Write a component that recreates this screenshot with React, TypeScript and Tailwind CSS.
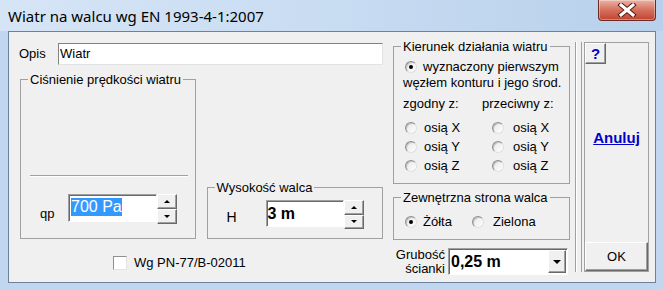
import type { ReactNode } from "react";

const Group = ({ title, className, children }: { title: string; className: string; children?: ReactNode }) => (
  <fieldset className={`border border-[#a0a0a0] ${className}`}>
    <legend className="ml-[7px] px-[2px] leading-[15px]">{title}</legend>
    {children}
  </fieldset>
);

const Radio = ({ checked }: { checked?: boolean }) => (
  <span className="flex h-[12px] w-[12px] flex-none items-center justify-center rounded-full border border-[#8f8f8f] border-b-[#e0e0e0] border-r-[#e0e0e0] bg-gradient-to-br from-[#e6e6e6] to-white shadow-[inset_1px_1px_0_#c0c0c0]">
    {checked && <span className="h-[4px] w-[4px] rounded-full bg-black" />}
  </span>
);

const SpinButtons = ({ height }: { height: string }) => (
  <div className={`flex w-[20px] flex-none flex-col ${height}`}>
    <div className="flex flex-1 items-center justify-center border border-b-[#696969] border-l-white border-r-[#696969] border-t-white bg-[#f0f0f0] shadow-[inset_-1px_-1px_0_#a0a0a0]">
      <span className="h-0 w-0 border-b-[3px] border-l-[3px] border-r-[3px] border-b-black border-l-transparent border-r-transparent" />
    </div>
    <div className="flex flex-1 items-center justify-center border border-b-[#696969] border-l-white border-r-[#696969] border-t-white bg-[#f0f0f0] shadow-[inset_-1px_-1px_0_#a0a0a0]">
      <span className="h-0 w-0 border-l-[3px] border-r-[3px] border-t-[3px] border-l-transparent border-r-transparent border-t-black" />
    </div>
  </div>
);

export default function App() {
  return (
    <div className="flex h-[290px] w-[663px] flex-col overflow-hidden bg-[#c2d7ef] font-['Liberation_Sans',Arial,sans-serif] text-[13px] text-black">
      {/* title bar */}
      <div className="flex h-[31px] flex-none items-start bg-gradient-to-r from-[#d6e5f6] via-[#c8dcf2] to-[#b8d0eb]">
        <span className="pl-[8px] pt-[6px] font-['Noto_Sans',sans-serif] text-[15px] leading-[20px] text-black">
          Wiatr na walcu wg EN 1993-4-1:2007
        </span>
        <div className="ml-auto mr-[7px] flex h-[21px] w-[58px] items-center justify-center rounded-b-[4px] border border-t-0 border-[#6b2a22] bg-gradient-to-b from-[#eab3a6] via-[#d4705d] to-[#c2412f] shadow-[inset_0_0_0_1px_rgba(255,255,255,0.35)]">
          <svg width="20" height="14" viewBox="0 0 20 14">
            <path d="M4 2 L16 12 M16 2 L4 12" stroke="#5a1a12" strokeWidth="5" strokeLinecap="square" />
            <path d="M4 2 L16 12 M16 2 L4 12" stroke="#ffffff" strokeWidth="3" strokeLinecap="square" />
          </svg>
        </div>
      </div>

      {/* client area */}
      <div className="ml-[8px] mr-[7px] flex h-[252px] flex-none border border-[#6c829c] bg-[#f0f0f0]">
        {/* left column */}
        <div className="ml-[10px] mt-[11px] flex w-[364px] flex-col">
          <div className="flex h-[22px] items-center">
            <span className="w-[39px]">Opis</span>
            <div className="flex h-[22px] w-[325px] items-center border border-b-[#e3e3e3] border-l-[#828282] border-r-[#e3e3e3] border-t-[#828282] bg-white pl-[1px]">
              Wiatr
            </div>
          </div>

          <div className="mt-[7px] flex items-end">
            <Group title="Ciśnienie prędkości wiatru" className="ml-[1px] h-[167px] w-[176px]">
              <div className="ml-[9px] mt-[88px] h-[2px] w-[158px] border-b border-t border-b-white border-t-[#a0a0a0]" />
              <div className="mt-[17px] flex items-start">
                <span className="w-[47px] pl-[19px] pt-[12px] leading-[15px]">qp</span>
                <div className="flex h-[28px] w-[89px] items-center border border-b-white border-l-[#a0a0a0] border-r-white border-t-[#a0a0a0] bg-white pb-[2px] pl-[2px] shadow-[inset_1px_1px_0_#696969]">
                  <span className="bg-[#3399ff] text-[16px] leading-[18px] text-white">700 Pa</span>
                </div>
                <SpinButtons height="h-[30px]" />
              </div>
            </Group>

            <Group title="Wysokość walca" className="ml-[11px] h-[59px] w-[177px]">
              <div className="mt-[5px] flex items-start">
                <span className="w-[58px] pl-[19px] pt-[10px] text-[14px] leading-[15px]">H</span>
                <div className="flex h-[27px] w-[78px] items-center border border-b-white border-l-[#a0a0a0] border-r-white border-t-[#a0a0a0] bg-white pl-[1px] shadow-[inset_1px_1px_0_#696969]">
                  <span className="text-[16px] font-bold leading-[18px]">3 m</span>
                </div>
                <SpinButtons height="h-[29px]" />
              </div>
            </Group>
          </div>

          <div className="mt-[14px] flex items-center pl-[94px]">
            <span className="h-[14px] w-[14px] border border-b-[#e3e3e3] border-l-[#8f8f8f] border-r-[#e3e3e3] border-t-[#8f8f8f] bg-white" />
            <span className="ml-[7px]">Wg PN-77/B-02011</span>
          </div>
        </div>

        {/* right column */}
        <div className="ml-[10px] mt-[7px] flex w-[177px] flex-col">
          <Group title="Kierunek działania wiatru" className="h-[145px]">
            <div className="mt-[5px] flex h-[16px] items-center pl-[11px]">
              <Radio checked />
              <span className="ml-[6px]">wyznaczony pierwszym</span>
            </div>
            <div className="flex h-[16px] items-center pl-[9px]">węzłem konturu i jego środ.</div>
            <div className="mt-[5px] flex h-[16px] items-center">
              <span className="w-[88px] pl-[9px]">zgodny z:</span>
              <span>przeciwny z:</span>
            </div>
            <div className="mt-[6px] flex flex-col">
              {["X", "Y", "Z"].map((axis) => (
                <div key={axis} className="flex h-[19px] items-center">
                  <div className="flex w-[98px] items-center pl-[11px]">
                    <Radio />
                    <span className="ml-[7px]">osią {axis}</span>
                  </div>
                  <Radio />
                  <span className="ml-[9px]">osią {axis}</span>
                </div>
              ))}
            </div>
          </Group>

          <Group title="Zewnętrzna strona walca" className="mt-[6px] h-[50px]">
            <div className="mt-[9px] flex h-[16px] items-center">
              <div className="flex w-[78px] items-center pl-[11px]">
                <Radio checked />
                <span className="ml-[6px]">Żółta</span>
              </div>
              <Radio />
              <span className="ml-[9px]">Zielona</span>
            </div>
          </Group>

          <div className="mt-[8px] flex items-start">
            <div className="flex w-[55px] flex-col pr-[3px] text-right leading-[14px]">
              <span>Grubość</span>
              <span>ścianki</span>
            </div>
            <div className="flex h-[27px] w-[120px] items-center border border-b-white border-l-[#a0a0a0] border-r-white border-t-[#a0a0a0] bg-white pl-[2px] shadow-[inset_1px_1px_0_#696969]">
              <span className="flex-1 text-[16px] font-bold leading-[18px]">0,25 m</span>
              <div className="mr-[1px] flex h-[23px] w-[18px] items-center justify-center border border-b-[#696969] border-l-white border-r-[#696969] border-t-white bg-[#f0f0f0] shadow-[inset_-1px_-1px_0_#a0a0a0]">
                <span className="h-0 w-0 border-l-[4px] border-r-[4px] border-t-[4px] border-l-transparent border-r-transparent border-t-black" />
              </div>
            </div>
          </div>
        </div>

        {/* separator groove */}
        <div className="ml-[5px] mt-[10px] h-[230px] w-[7px] border-l border-r border-[#a0a0a0] shadow-[inset_1px_0_0_#fff]" />

        {/* buttons panel */}
        <div className="ml-[2px] mt-[10px] flex h-[230px] w-[65px] flex-col border border-[#a0a0a0]">
          <div className="flex h-[21px] w-[21px] items-center justify-center border border-b-[#696969] border-l-white border-r-[#696969] border-t-white bg-[#f0f0f0] text-[15px] font-bold leading-none text-[#0000cc] shadow-[inset_-1px_-1px_0_#a0a0a0]">
            ?
          </div>
          <div className="mt-[65px] text-center text-[15px] font-bold leading-[18px] text-[#0000cc] underline">Anuluj</div>
          <div className="mt-auto flex h-[29px] items-center justify-center border border-b-[#696969] border-l-white border-r-[#696969] border-t-white bg-[#f0f0f0] shadow-[inset_-1px_-1px_0_#a0a0a0]">
            OK
          </div>
        </div>
      </div>
    </div>
  );
}
